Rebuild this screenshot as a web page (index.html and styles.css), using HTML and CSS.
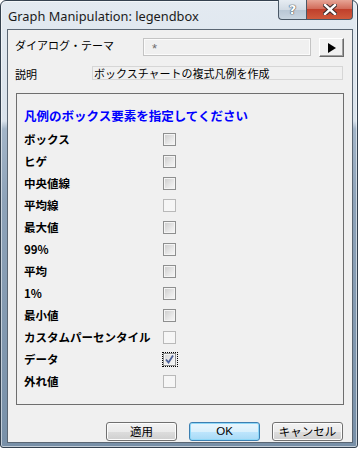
FILE: index.html
```html
<!DOCTYPE html>
<html lang="ja">
<head>
    <meta charset="UTF-8">
    <meta name="viewport" content="width=device-width, initial-scale=1.0">
    <title>Graph Manipulation: legendbox</title>
    <link rel="stylesheet" href="styles.css">
</head>
<body>
    <div class="window">
        <div class="titlebar">
            <span class="title">Graph Manipulation: legendbox</span>
            <div class="caption-buttons">
                <span class="cap-btn help">?</span>
                <span class="cap-btn close">
                    <svg width="14" height="11" viewBox="0 0 14 11">
                        <path d="M2 1 L12 10 M12 1 L2 10" stroke="#3a2a2a" stroke-width="4.4" stroke-linecap="square"/>
                        <path d="M2 1 L12 10 M12 1 L2 10" stroke="#fff" stroke-width="2.4" stroke-linecap="square"/>
                    </svg>
                </span>
            </div>
        </div>

        <div class="client">
            <div class="theme-row">
                <span class="label theme-label">ダイアログ・テーマ</span>
                <span class="theme-input">*</span>
                <span class="arrow-btn">
                    <svg width="8" height="10" viewBox="0 0 8 10"><path d="M0 0 L8 5 L0 10 Z" fill="#000"/></svg>
                </span>
            </div>

            <div class="desc-row">
                <span class="label desc-label">説明</span>
                <span class="desc-box">ボックスチャートの複式凡例を作成</span>
            </div>

            <div class="group">
                <div class="group-title">凡例のボックス要素を指定してください</div>
                <div class="options">
                    <span class="opt">ボックス</span><span class="check"></span>
                    <span class="opt">ヒゲ</span><span class="check"></span>
                    <span class="opt">中央値線</span><span class="check"></span>
                    <span class="opt">平均線</span><span class="check disabled"></span>
                    <span class="opt">最大値</span><span class="check"></span>
                    <span class="opt">99%</span><span class="check"></span>
                    <span class="opt">平均</span><span class="check"></span>
                    <span class="opt">1%</span><span class="check"></span>
                    <span class="opt">最小値</span><span class="check"></span>
                    <span class="opt">カスタムパーセンタイル</span><span class="check disabled"></span>
                    <span class="opt">データ</span>
                    <span class="focus">
                        <span class="check checked">
                            <svg width="11" height="11" viewBox="0 0 11 11"><path d="M2 5.5 L4.5 8.5 L9 1.5" stroke="#4b5f99" stroke-width="1.8" fill="none"/></svg>
                        </span>
                    </span>
                    <span class="opt">外れ値</span><span class="check disabled"></span>
                </div>
            </div>

            <div class="buttons">
                <span class="btn">適用</span>
                <span class="btn default">OK</span>
                <span class="btn">キャンセル</span>
            </div>
        </div>
    </div>
</body>
</html>
```

FILE: styles.css
```css
* {
    margin: 0;
    padding: 0;
    box-sizing: border-box;
}

body {
    background-color: #fff;
    font-family: "Noto Sans CJK JP", sans-serif;
    color: #000;
}

.window {
    width: 358px;
    height: 448px;
    border: 1px solid #34414f;
    border-radius: 6px 6px 3px 3px;
    padding: 0 4px 4px 6px;
    display: flex;
    flex-direction: column;
    background: linear-gradient(to bottom, #e3eaf1 0, #d9e2eb 120px, #a3b5c8 128px, #8ea3b9 200px, #7890a8 100%);
    box-shadow: inset 0 0 0 1px rgba(255,255,255,0.55);
}

.titlebar {
    height: 28px;
    display: flex;
    align-items: flex-start;
    justify-content: space-between;
}

.title {
    font-family: "Noto Sans", sans-serif;
    font-size: 12.8px;
    line-height: 16px;
    padding: 7px 0 0 1px;
    color: #1a1a1a;
}

.caption-buttons {
    display: flex;
    margin-top: -1px;
}

.cap-btn {
    height: 20px;
    border: 1px solid #4a5866;
    border-top: none;
    display: flex;
    align-items: center;
    justify-content: center;
}

.help {
    width: 28px;
    border-radius: 0 0 0 4px;
    border-right: none;
    background: linear-gradient(to bottom, #e6ecf2 0, #d2dbe4 50%, #b8c6d4 51%, #c9d5e0 100%);
    font-family: "DejaVu Sans", sans-serif;
    font-weight: bold;
    font-size: 13px;
    color: #fff;
    text-shadow: 0 0 1px #44505c, 0 0 1px #44505c, 0 0 1px #44505c;
}

.close {
    width: 47px;
    border-radius: 0 0 4px 0;
    background: linear-gradient(to bottom, #e7a596 0, #d26d5c 45%, #c0402c 50%, #cf5a3c 100%);
}

.client {
    height: 414px;
    border: 1px solid #5a6673;
    background-color: #f0f0f0;
    padding: 8px 8px 0 7px;
    display: flex;
    flex-direction: column;
}

.label {
    font-size: 11px;
    line-height: 14px;
}

.theme-row {
    display: flex;
    align-items: flex-start;
    height: 19px;
}

.theme-label {
    width: 128px;
}

.theme-input {
    width: 168px;
    height: 18px;
    border: 1px solid #c4c4c4;
    box-shadow: inset 0 0 0 1px #fbfbfb;
    background-color: #f0f0f0;
    color: #6d6d6d;
    font-family: "Liberation Sans", sans-serif;
    font-size: 13px;
    line-height: 20px;
    padding-left: 8px;
}

.arrow-btn {
    width: 25px;
    height: 19px;
    margin-left: 8px;
    border-top: 1px solid #fff;
    border-left: 1px solid #fff;
    border-right: 1px solid #6a6a6a;
    border-bottom: 1px solid #6a6a6a;
    box-shadow: inset -1px -1px 0 #a0a0a0;
    background-color: #f0f0f0;
    display: flex;
    align-items: center;
    justify-content: center;
}

.desc-row {
    display: flex;
    align-items: flex-start;
    margin-top: 9px;
    height: 14px;
}

.desc-label {
    width: 77px;
    margin-top: 1px;
}

.desc-box {
    width: 251px;
    height: 14px;
    border: 1px solid #d6d6d6;
    font-size: 11px;
    line-height: 12px;
    padding-left: 1px;
    white-space: nowrap;
}

.group {
    margin: 13px 0 0 1px;
    height: 312px;
    border: 1px solid #6e6e6e;
    padding: 14px 0 0 7px;
}

.group-title {
    font-size: 12.5px;
    font-weight: bold;
    line-height: 16px;
    color: #0000ff;
}

.options {
    display: grid;
    grid-template-columns: 139px 16px;
    grid-auto-rows: 22px;
    align-items: center;
    margin-top: 4px;
}

.opt {
    font-size: 11.5px;
    font-weight: bold;
    line-height: 16px;
    white-space: nowrap;
}

.check {
    width: 13px;
    height: 13px;
    border: 1px solid #8e8f8f;
    box-shadow: inset 0 0 0 1px #f4f4f4;
    background: linear-gradient(135deg, #cbcbcb 0, #e8e8e8 60%, #f7f7f7 100%);
    display: flex;
    align-items: center;
    justify-content: center;
}

.check.disabled {
    border-color: #b9b9b9;
    box-shadow: none;
    background: #f6f6f6;
}

.check.checked {
    background: linear-gradient(135deg, #d6d6d6 0, #ececec 60%, #f7f7f7 100%);
}

.focus {
    width: 16px;
    height: 15px;
    margin-left: -1px;
    border: 1px dotted #000;
    display: flex;
    align-items: center;
}

.buttons {
    display: flex;
    justify-content: flex-end;
    gap: 12px;
    margin: 17px 1px 0 0;
}

.btn {
    width: 71px;
    height: 19px;
    border: 1px solid #707070;
    border-radius: 3px;
    background: linear-gradient(to bottom, #f2f2f2 0, #ebebeb 50%, #dddddd 51%, #cfcfcf 100%);
    box-shadow: inset 0 0 0 1px #fcfcfc;
    font-size: 11.5px;
    line-height: 16px;
    text-align: center;
}

.btn.default {
    border-color: #3c7fb1;
    background: linear-gradient(to bottom, #eaf6fd 0, #d9f0fc 50%, #bee6fd 51%, #a7d9f5 100%);
    box-shadow: inset 0 0 0 1px #8ed8f8;
    font-family: "Liberation Sans", sans-serif;
}
```
